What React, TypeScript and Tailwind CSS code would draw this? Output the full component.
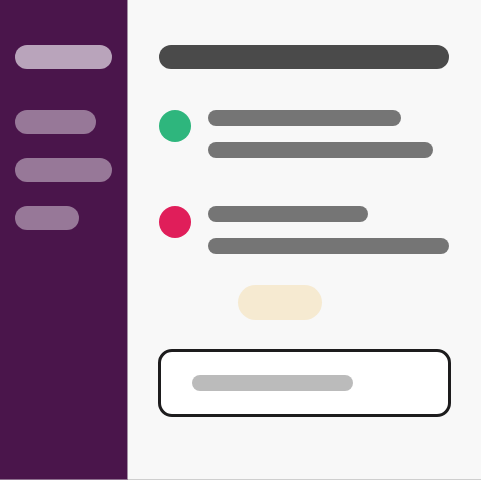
const Bar = ({ className }: { className: string }) => <div className={`rounded-full ${className}`} />;

const Message = ({ dot, first, second }: { dot: string; first: string; second: string }) => (
  <div className="flex gap-[17px]">
    <div className={`h-8 w-8 shrink-0 rounded-full ${dot}`} />
    <div className="flex flex-col gap-4">
      <Bar className={`h-4 bg-[#757575] ${first}`} />
      <Bar className={`h-4 bg-[#757575] ${second}`} />
    </div>
  </div>
);

export default function App() {
  return (
    <div className="flex h-[480px] w-[481px] overflow-hidden">
      {/* sidebar */}
      <aside className="flex w-[128px] shrink-0 flex-col border-r border-b border-r-[#a48fa5] border-b-[#8d6f8e] bg-[#4a154b] pl-[15px] pt-[45px]">
        <Bar className="h-6 w-[97px] bg-[#b9a4bb]" />
        <div className="mt-[41px] flex flex-col gap-6">
          <Bar className="h-6 w-[81px] bg-[#977898]" />
          <Bar className="h-6 w-[97px] bg-[#977898]" />
          <Bar className="h-6 w-16 bg-[#977898]" />
        </div>
      </aside>

      {/* channel */}
      <main className="flex flex-1 flex-col border-b border-[#cfcfcf] bg-[#f8f8f8] pl-[31px] pt-[45px]">
        <Bar className="h-6 w-[290px] bg-[#4a4a4a]" />
        <div className="mt-[41px] flex flex-col gap-12">
          <Message dot="bg-[#2eb67d]" first="w-[193px]" second="w-[225px]" />
          <Message dot="bg-[#e01e5a]" first="w-[160px]" second="w-[241px]" />
        </div>
        <Bar className="ml-[79px] mt-[31px] h-[35px] w-[84px] bg-[#f6ead1]" />
        <div className="-ml-px mt-[29px] flex h-[68px] w-[293px] items-center rounded-[14px] border-[3px] border-[#1d1c1d] bg-white pl-[31px]">
          <Bar className="h-4 w-[161px] bg-[#bbbbbb]" />
        </div>
      </main>
    </div>
  );
}
